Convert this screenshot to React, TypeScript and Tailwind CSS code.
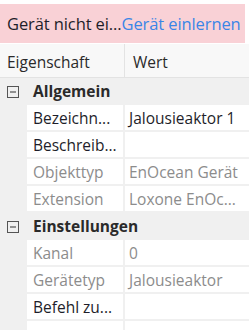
import React from "react";

type Row =
  | { kind: "group"; label: string }
  | { kind: "prop"; label: string; value: string; muted?: boolean };

const rows: Row[] = [
  { kind: "group", label: "Allgemein" },
  { kind: "prop", label: "Bezeichn...", value: "Jalousieaktor 1" },
  { kind: "prop", label: "Beschreib...", value: "" },
  { kind: "prop", label: "Objekttyp", value: "EnOcean Gerät", muted: true },
  { kind: "prop", label: "Extension", value: "Loxone EnOc...", muted: true },
  { kind: "group", label: "Einstellungen" },
  { kind: "prop", label: "Kanal", value: "0", muted: true },
  { kind: "prop", label: "Gerätetyp", value: "Jalousieaktor", muted: true },
  { kind: "prop", label: "Befehl zu...", value: "" },
  { kind: "prop", label: "", value: "" },
];

function Minus() {
  return (
    <svg width="12" height="12" viewBox="0 0 12 12" className="block">
      <rect x="0.5" y="0.5" width="11" height="11" fill="none" stroke="#555" strokeWidth="1" />
      <line x1="3" y1="6" x2="9" y2="6" stroke="#333" strokeWidth="1" />
    </svg>
  );
}

export default function App() {
  return (
    <div
      className="w-[252px] h-[330px] bg-white overflow-hidden text-[15.5px] text-[#1e1e1e]"
      style={{ fontFamily: '"Open Sans", "Noto Sans", sans-serif' }}
    >
      <div className="mt-[4px] h-[39px] w-[245px] bg-[#f9d1d6] flex items-center pl-[7px] pt-[2px] whitespace-nowrap text-[16.5px] tracking-[-0.1px]">
        <span className="text-[#1e1e2a]">Gerät nicht ei...</span>
        <span className="text-[#3a86e6]">Gerät einlernen</span>
      </div>
      <div className="mt-[1px] h-[34px] w-[249px] bg-[#f8f8f8] border-b border-[#e3e3e3] flex">
        <div className="w-[125px] border-r border-[#e3e3e3] flex items-center pl-[7px] pt-[4px] text-[#2a2a2a]">
          Eigenschaft
        </div>
        <div className="flex-1 flex items-center pl-[8px] pt-[4px] text-[#2a2a2a]">Wert</div>
      </div>
      <div className="bg-[#f0f0f0] w-[249px] h-[260px] flex flex-col gap-[2px]">
        {rows.map((r, i) =>
          r.kind === "group" ? (
            <div key={i} className="h-[25px] flex items-center pt-[2px]">
              <div className="w-[26px] flex justify-center">
                <Minus />
              </div>
              <span className="pl-[7px] font-bold text-[#2a2a2a]">{r.label}</span>
            </div>
          ) : (
            <div key={i} className="h-[25px] flex gap-[2px] pl-[27px]">
              <div
                className={`w-[96px] bg-white flex items-center pl-[6px] pt-[2px] whitespace-nowrap overflow-hidden ${
                  r.muted ? "text-[#8c8c8c]" : "text-[#1e1e2a]"
                }`}
              >
                {r.label}
              </div>
              <div
                className={`flex-1 bg-white flex items-center pl-[4px] pt-[2px] whitespace-nowrap overflow-hidden ${
                  r.muted ? "text-[#8c8c8c]" : "text-[#1e1e2a]"
                }`}
              >
                {r.value}
              </div>
            </div>
          )
        )}
      </div>
    </div>
  );
}
